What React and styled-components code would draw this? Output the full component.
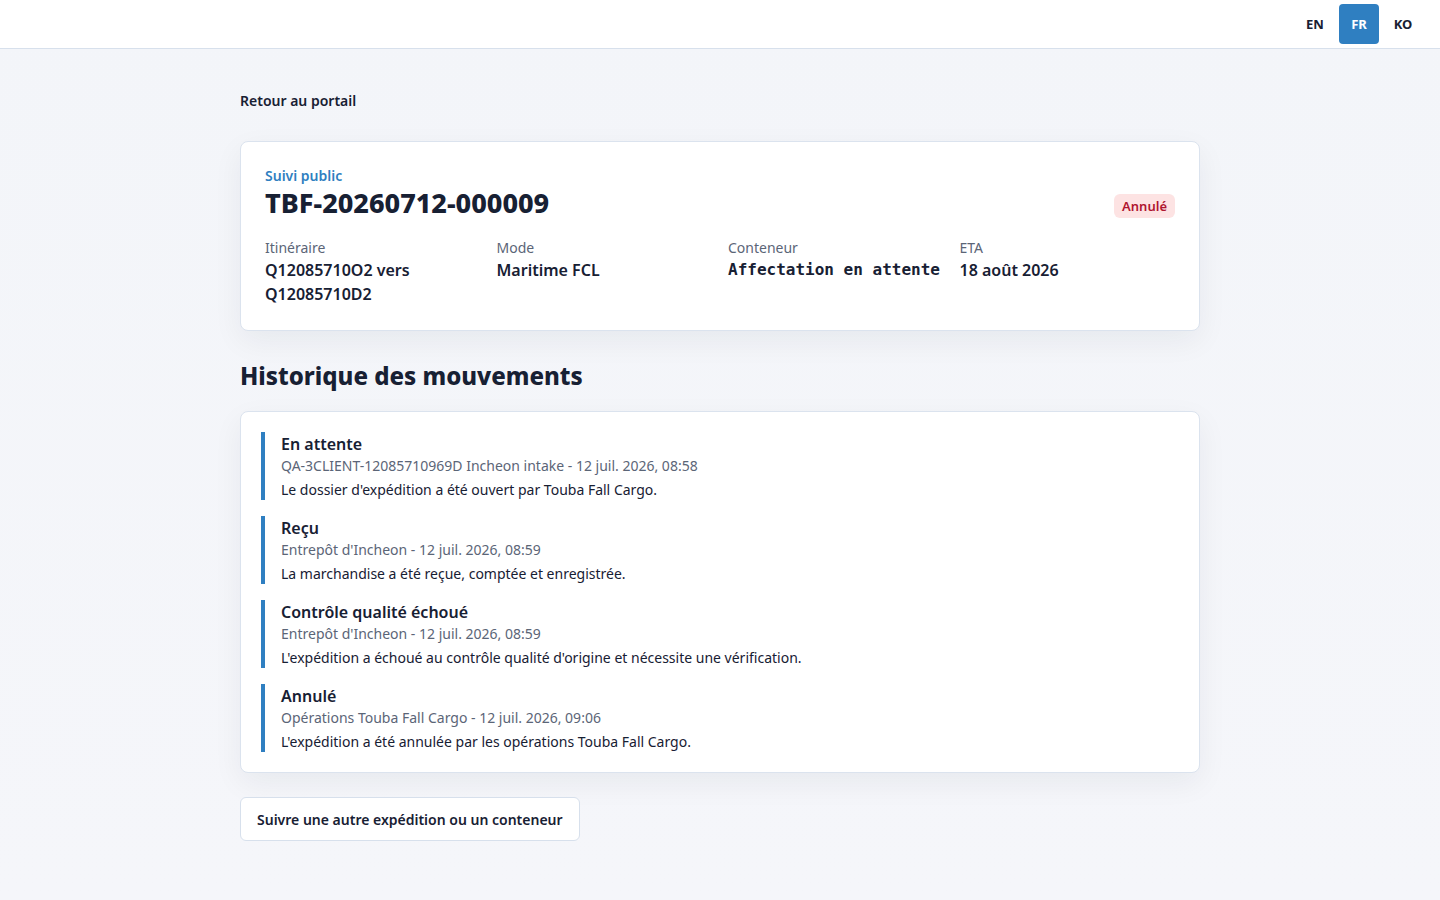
import styled, { createGlobalStyle } from 'styled-components'

const GlobalStyle = createGlobalStyle`
  html, body {
    margin: 0;
    padding: 0;
  }
  body {
    font-family: 'Noto Sans', 'Liberation Sans', sans-serif;
    color: #172033;
    background: linear-gradient(180deg, #f3f5f9 0%, #f5f6fa 100%);
    min-height: 100vh;
  }
`

const Header = styled.header`
  height: 48px;
  background: #ffffff;
  border-bottom: 1px solid #d7e0ec;
  display: flex;
  align-items: center;
  justify-content: flex-end;
  padding: 0 17px 0 20px;
`

const LangSwitch = styled.nav`
  display: flex;
`

const LangButton = styled.button`
  width: 40px;
  height: 40px;
  margin-left: 4px;
  border: none;
  border-radius: 4px;
  font-family: inherit;
  font-size: 13px;
  font-weight: 700;
  cursor: pointer;
  background: ${(p) => (p.$active ? '#2f7fc1' : 'transparent')};
  color: ${(p) => (p.$active ? '#ffffff' : '#172033')};
`

const Main = styled.main`
  max-width: 960px;
  margin: 0 auto;
  padding: 40px 0 60px;
`

const BackLink = styled.a`
  display: inline-block;
  font-size: 14px;
  font-weight: 600;
  line-height: 22px;
  color: #172033;
  text-decoration: none;
  margin-bottom: 29px;
`

const Card = styled.section`
  background: #ffffff;
  border: 1px solid #dbe3ee;
  border-radius: 8px;
  box-shadow: 0 10px 30px rgba(23, 32, 51, 0.06);
`

const SummaryCard = styled(Card)`
  padding: 24px;
`

const SummaryTop = styled.div`
  display: flex;
  justify-content: space-between;
  align-items: flex-end;
`

const Eyebrow = styled.div`
  font-size: 14px;
  font-weight: 600;
  line-height: 20px;
  color: #2f7fc1;
`

const Reference = styled.h1`
  margin: 0;
  font-size: 27px;
  font-weight: 800;
  line-height: 34px;
  color: #172033;
`

const Badge = styled.span`
  display: inline-block;
  margin-bottom: 2px;
  padding: 0 8px;
  height: 24px;
  line-height: 24px;
  border-radius: 6px;
  background: #fde3e3;
  color: #b01530;
  font-size: 13px;
  font-weight: 600;
`

const Facts = styled.dl`
  display: grid;
  grid-template-columns: repeat(4, 1fr);
  gap: 16px;
  margin: 18px 0 0;
`

const Fact = styled.div``

const FactLabel = styled.dt`
  font-size: 14px;
  line-height: 20px;
  color: #5b6577;
`

const FactValue = styled.dd`
  margin: 0;
  font-size: 16px;
  font-weight: 600;
  line-height: 24px;
  color: #172033;
  font-family: ${(p) =>
    p.$mono ? "'DejaVu Sans Mono', 'Liberation Mono', monospace" : 'inherit'};
`

const SectionTitle = styled.h2`
  margin: 28px 0 18px;
  font-size: 24px;
  font-weight: 800;
  line-height: 34px;
  color: #172033;
`

const TimelineCard = styled(Card)`
  padding: 20px;
  display: flex;
  flex-direction: column;
  gap: 16px;
`

const Event = styled.article`
  border-left: 4px solid #2f7fc1;
  padding-left: 16px;
`

const EventTitle = styled.h3`
  margin: 0;
  font-size: 16px;
  font-weight: 600;
  line-height: 24px;
  color: #172033;
`

const EventMeta = styled.div`
  font-size: 14px;
  line-height: 20px;
  color: #5b6577;
`

const EventText = styled.p`
  margin: 4px 0 0;
  font-size: 14px;
  line-height: 20px;
  color: #172033;
`

const TrackButton = styled.button`
  margin-top: 24px;
  height: 44px;
  padding: 0 16px;
  background: #ffffff;
  border: 1px solid #d7e0ec;
  border-radius: 6px;
  font-family: inherit;
  font-size: 14px;
  font-weight: 600;
  color: #172033;
  cursor: pointer;
`

const events = [
  {
    title: 'En attente',
    meta: 'QA-3CLIENT-12085710969D Incheon intake - 12 juil. 2026, 08:58',
    text: "Le dossier d'expédition a été ouvert par Touba Fall Cargo.",
  },
  {
    title: 'Reçu',
    meta: "Entrepôt d'Incheon - 12 juil. 2026, 08:59",
    text: 'La marchandise a été reçue, comptée et enregistrée.',
  },
  {
    title: 'Contrôle qualité échoué',
    meta: "Entrepôt d'Incheon - 12 juil. 2026, 08:59",
    text: "L'expédition a échoué au contrôle qualité d'origine et nécessite une vérification.",
  },
  {
    title: 'Annulé',
    meta: 'Opérations Touba Fall Cargo - 12 juil. 2026, 09:06',
    text: "L'expédition a été annulée par les opérations Touba Fall Cargo.",
  },
]

const App = () => {
  return (
    <>
      <GlobalStyle />
      <Header>
        <LangSwitch>
          <LangButton>EN</LangButton>
          <LangButton $active>FR</LangButton>
          <LangButton>KO</LangButton>
        </LangSwitch>
      </Header>
      <Main>
        <BackLink href="#">Retour au portail</BackLink>
        <SummaryCard>
          <SummaryTop>
            <div>
              <Eyebrow>Suivi public</Eyebrow>
              <Reference>TBF-20260712-000009</Reference>
            </div>
            <Badge>Annulé</Badge>
          </SummaryTop>
          <Facts>
            <Fact>
              <FactLabel>Itinéraire</FactLabel>
              <FactValue>Q12085710O2 vers Q12085710D2</FactValue>
            </Fact>
            <Fact>
              <FactLabel>Mode</FactLabel>
              <FactValue>Maritime FCL</FactValue>
            </Fact>
            <Fact>
              <FactLabel>Conteneur</FactLabel>
              <FactValue $mono>Affectation en attente</FactValue>
            </Fact>
            <Fact>
              <FactLabel>ETA</FactLabel>
              <FactValue>18 août 2026</FactValue>
            </Fact>
          </Facts>
        </SummaryCard>
        <SectionTitle>Historique des mouvements</SectionTitle>
        <TimelineCard>
          {events.map((e) => (
            <Event key={e.title}>
              <EventTitle>{e.title}</EventTitle>
              <EventMeta>{e.meta}</EventMeta>
              <EventText>{e.text}</EventText>
            </Event>
          ))}
        </TimelineCard>
        <TrackButton>Suivre une autre expédition ou un conteneur</TrackButton>
      </Main>
    </>
  )
}

export default App
